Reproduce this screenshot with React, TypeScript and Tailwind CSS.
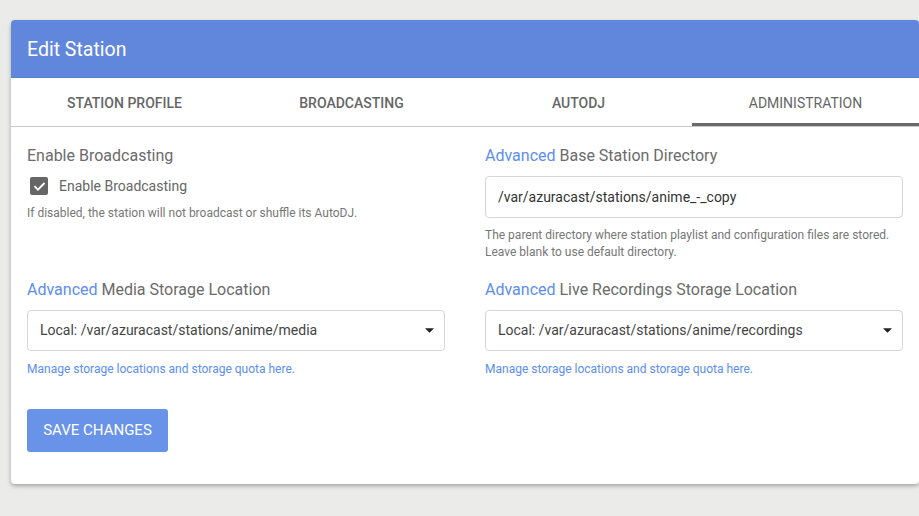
export default function App() {
	return (
		<div className="min-h-screen w-full bg-[#ebebea] pt-5 pl-[11px] font-['Roboto',sans-serif]">
			<div className="w-[908px] rounded-t-[5px] rounded-b-[4px] bg-white shadow-[0_2px_4px_rgba(0,0,0,0.3)]">
				<div className="flex h-[58px] items-center rounded-t-[4px] bg-[#6187dc] px-4 border-b border-[#5a7fd4]">
					<h1 className="pt-[3px] text-[19.5px] font-normal text-white">Edit Station</h1>
				</div>

				<div className="grid grid-cols-4 border-b border-[#c8c8c8]">
					{["Station Profile", "Broadcasting", "AutoDJ", "Administration"].map((t, i) => (
						<div
							key={t}
							className={
								i === 3
									? "flex h-[48px] items-center justify-center border-b-[3px] border-[#6b6b6b] -mb-px pt-[5px] text-[14px] font-normal uppercase text-[#666]"
									: "flex h-[48px] items-center justify-center pt-[2px] text-[14px] font-medium uppercase text-[#666]"
							}>
							{t}
						</div>
					))}
				</div>

				<div className="px-4 pt-[17px] pb-[32px]">
					<div className="grid grid-cols-2 gap-x-10">
						<div>
							<div className="text-[16px] leading-6 text-[#6b6b6b]">Enable Broadcasting</div>
							<label className="mt-[8px] flex items-center gap-[11px] pl-[3px]">
								<span className="flex h-[18px] w-[18px] items-center justify-center rounded-[2px] bg-[#666]">
									<svg viewBox="0 0 24 24" className="h-[15px] w-[15px]" fill="none" stroke="white" strokeWidth="3" strokeLinecap="square">
										<path d="M5 12.5l4.5 4.5L19 7.5" />
									</svg>
								</span>
								<span className="text-[14px] leading-5 text-[#666]">Enable Broadcasting</span>
							</label>
							<p className="mt-[9px] text-[12px] leading-[17px] text-[#777]">If disabled, the station will not broadcast or shuffle its AutoDJ.</p>
						</div>

						<div>
							<div className="text-[16px] leading-6 text-[#6b6b6b]">
								<span className="text-[#5b8ef0]">Advanced</span> Base Station Directory
							</div>
							<div className="mt-2 flex h-[42px] items-center rounded-[4px] border border-[#d6d6d6] px-3">
								<span className="text-[14px] text-[#333]">/var/azuracast/stations/anime_-_copy</span>
							</div>
							<p className="mt-[9px] text-[12px] leading-[17px] text-[#777]">
								The parent directory where station playlist and configuration files are stored.
								<br />
								Leave blank to use default directory.
							</p>
						</div>

						<div className="mt-[17px]">
							<div className="text-[16px] leading-6 text-[#6b6b6b]">
								<span className="text-[#5b8ef0]">Advanced</span> Media Storage Location
							</div>
							<div className="mt-[8px] flex h-[41px] items-center justify-between rounded-[4px] border border-[#d6d6d6] pl-3 pr-[10px]">
								<span className="text-[14px] text-[#444]">Local: /var/azuracast/stations/anime/media</span>
								<svg viewBox="0 0 8 4" className="h-[5px] w-[9px]">
									<path d="M0 0h8L4 4z" fill="#222" />
								</svg>
							</div>
							<p className="mt-[10px] text-[12px] leading-[17px] text-[#5b8ef0]">Manage storage locations and storage quota here.</p>
						</div>

						<div className="mt-[17px]">
							<div className="text-[16px] leading-6 text-[#6b6b6b]">
								<span className="text-[#5b8ef0]">Advanced</span> Live Recordings Storage Location
							</div>
							<div className="mt-[8px] flex h-[41px] items-center justify-between rounded-[4px] border border-[#d6d6d6] pl-3 pr-[10px]">
								<span className="text-[14px] text-[#444]">Local: /var/azuracast/stations/anime/recordings</span>
								<svg viewBox="0 0 8 4" className="h-[5px] w-[9px]">
									<path d="M0 0h8L4 4z" fill="#222" />
								</svg>
							</div>
							<p className="mt-[10px] text-[12px] leading-[17px] text-[#5b8ef0]">Manage storage locations and storage quota here.</p>
						</div>
					</div>

					<button className="mt-[31px] h-[43px] w-[141px] rounded-[3px] bg-[#6993e9] text-[15px] font-normal uppercase text-white">Save Changes</button>
				</div>
			</div>
		</div>
	);
}
